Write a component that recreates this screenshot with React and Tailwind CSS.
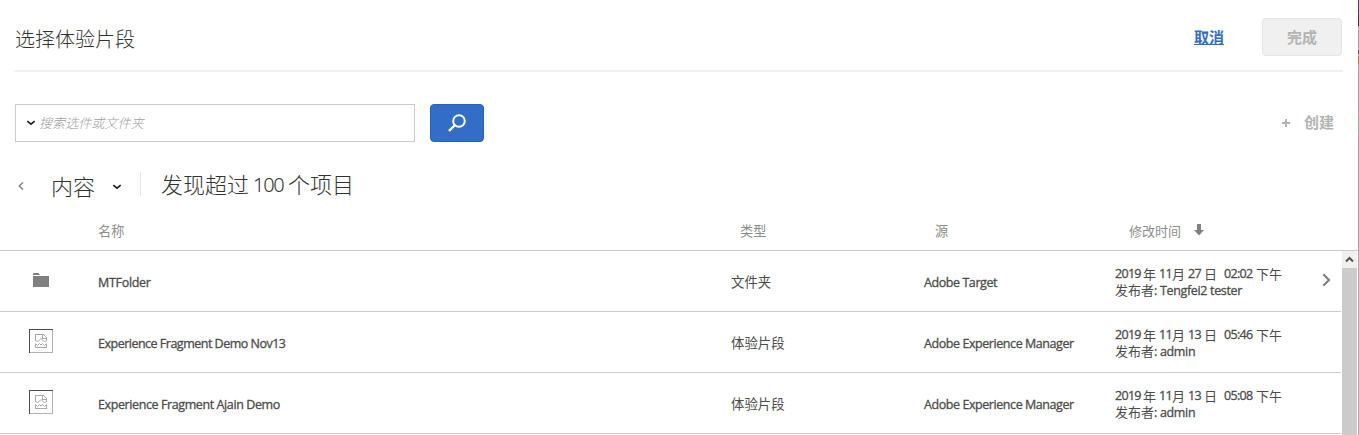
import React from "react";

const rows = [
  { folder: true, name: "MTFolder", tracking: "tracking-[-0.3px]", type: "文件夹", source: "Adobe Target", day: "27", time: "02:02", by: "Tengfei2 tester" },
  { name: "Experience Fragment Demo Nov13", tracking: "tracking-[-0.5px]", type: "体验片段", source: "Adobe Experience Manager", day: "13", time: "05:46", by: "admin" },
  { name: "Experience Fragment Ajain Demo", tracking: "tracking-[-0.4px]", type: "体验片段", source: "Adobe Experience Manager", day: "13", time: "05:08", by: "admin" },
];

function Latin({ children, className = "tracking-[-0.43px]" }) {
  return (
    <span className={`font-['Open_Sans',sans-serif] text-[12.5px] [-webkit-text-stroke:0.3px_#4b4b4b] ${className}`}>{children}</span>
  );
}

function Digits({ children, className = "" }) {
  return (
    <span className={`inline-block font-['Open_Sans',sans-serif] text-[12.5px] tracking-[-0.7px] [-webkit-text-stroke:0.3px_#4b4b4b] ${className}`}>{children}</span>
  );
}

function Chevron() {
  return (
    <svg width="10" height="6" viewBox="0 0 10 6" className="block">
      <path d="M1.3 1.2 5 4.2 8.7 1.2" fill="none" stroke="#1e1e1e" strokeWidth="1.7" />
    </svg>
  );
}

function FolderIcon() {
  return (
    <svg width="16" height="14" viewBox="0 0 16 14" className="block">
      <path d="M0 2V1Q0 0 1 0H5.5L7 2ZM0 3H16V14H0Z" fill="#808080" />
    </svg>
  );
}

function MissingImageIcon() {
  return (
    <svg width="24" height="24" viewBox="0 0 24 24" className="block" shapeRendering="crispEdges">
      <path d="M24 0V24H0" fill="none" stroke="#b0b0b0" strokeWidth="2" />
      <path d="M0 24V0H24" fill="none" stroke="#4b4b4b" strokeWidth="2" />
      <g fill="none" stroke="#a8a8a8" strokeWidth="1">
        <path d="M6.5 12V5.5H14.5L17.5 8.5V12M13.5 5.5V9.5H17.5" />
        <path d="M6.5 18.5H17.5M6.5 18.5V15M17.5 18.5V15" />
        <path d="M6.5 11 8.5 13 12 9.5 15.5 13 17.5 11M6.5 14.5 8.5 16.5 10.5 14.5 12 16 13.5 14.5 15.5 16.5 17.5 14.5" shapeRendering="auto" />
      </g>
    </svg>
  );
}

function Row({ row }) {
  return (
    <div className="flex h-[61px] w-[1341px] shrink-0 items-center border-b border-[#cbcbcb] text-[13px] text-[#4b4b4b]">
      <div className="flex w-[98px] shrink-0 pb-0.5 pl-[29px]">
        {row.folder ? <span className="pl-1"><FolderIcon /></span> : <MissingImageIcon />}
      </div>
      <div className="w-[633px] shrink-0 pt-1"><Latin className={row.tracking}>{row.name}</Latin></div>
      <div className="w-[193px] shrink-0 pt-0.5 text-[13.4px]">{row.type}</div>
      <div className="w-[191px] shrink-0 pt-1"><Latin>{row.source}</Latin></div>
      <div className="w-[207px] shrink-0 pt-0.5 leading-4">
        <div className="flex h-4">
          <Digits className="w-[28px]">2019</Digits>年
          <Digits className="ml-[3px] w-[13px]">11</Digits>月
          <Digits className="ml-[3px] w-[16px]">{row.day}</Digits>日
          <Digits className="ml-[7px] w-[32px]">{row.time}</Digits>下午
        </div>
        <div className="h-4">发布者<Latin className="tracking-[-0.33px]">: {row.by}</Latin></div>
      </div>
      {row.folder && (
        <svg width="9" height="14" viewBox="0 0 9 14" className="mb-0.5 block">
          <path d="M1.3 1.3 7 7 1.3 12.7" fill="none" stroke="#808080" strokeWidth="2.1" />
        </svg>
      )}
    </div>
  );
}

export default function App() {
  return (
    <div className="flex h-[435px] w-[1359px] overflow-hidden bg-white font-['Noto_Sans','Noto_Sans_CJK_SC',sans-serif] text-[#323232]">
      <div className="flex w-[1358px] shrink-0 flex-col">
        <header className="ml-[14px] flex h-[72px] w-[1329px] shrink-0 items-center border-b-2 border-[#f0f0f0] pt-[3px]">
          <h1 className="ml-px pt-[5px] font-['Noto_Sans_CJK_SC'] text-[20px] font-light leading-[30px]">选择体验片段</h1>
          <a className="ml-auto font-['Noto_Sans_CJK_SC'] text-[15px] font-bold leading-[22px] text-[#326ec8] underline underline-offset-1">取消</a>
          <button className="ml-[38px] mr-px h-[38px] w-[80px] rounded-[4px] border border-[#e4e4e4] bg-[#f0f0f0] pt-0.5 font-['Noto_Sans_CJK_SC'] text-[15px] font-bold text-[#b3b3b3]">完成</button>
        </header>

        <div className="mt-8 flex h-[38px] shrink-0 items-center pl-[15px] pr-[24px]">
          <div className="flex h-[38px] w-[400px] items-center border border-[#cbcbcb] pl-[10px]">
            <Chevron />
            <span className="ml-[3px] font-['Noto_Sans_CJK_SC'] text-[13.1px] font-light italic text-[#a0a0a0]">搜索选件或文件夹</span>
          </div>
          <button className="ml-[15px] flex h-[38px] w-[54px] items-center justify-center rounded-[4px] border border-[#2362be] bg-[#326ec8]">
            <svg width="18" height="18" viewBox="0 0 18 18">
              <circle cx="11" cy="7" r="5.8" fill="none" stroke="white" strokeWidth="2" />
              <path d="M7 11 1 17" stroke="white" strokeWidth="2.4" />
            </svg>
          </button>
          <div className="ml-auto flex items-center text-[#b3b3b3]">
            <svg width="8" height="8" viewBox="0 0 8 8"><path d="M4 0V8M0 4H8" stroke="#b3b3b3" strokeWidth="2" /></svg>
            <span className="ml-[14px] pb-0.5 font-['Noto_Sans_CJK_SC'] text-[15px] font-bold leading-[22px]">创建</span>
          </div>
        </div>

        <div className="mt-[28px] flex h-[32px] shrink-0 items-center pl-[18px] font-['Noto_Sans_CJK_SC'] text-[22px] font-light">
          <svg width="6" height="8" viewBox="0 0 6 8"><path d="M5 0.5 1.3 4 5 7.5" fill="none" stroke="#808080" strokeWidth="1.5" /></svg>
          <span className="ml-[27px] pb-px">内容</span>
          <span className="ml-[17px] pt-0.5"><Chevron /></span>
          <span className="mb-1 ml-[18px] h-6 w-px bg-[#e6e6e6]" />
          <span className="ml-5 pb-1.5">发现超过</span>
          <span className="ml-[4px] w-[35px] pb-0.5 font-['Noto_Sans'] text-[20px] tracking-[-1.3px]">100</span>
          <span className="pb-1.5">个项目</span>
        </div>

        <div className="flex h-[49px] shrink-0 items-center border-b border-[#cbcbcb] pt-[11px] text-[13.2px] text-[#8c8c8c]">
          <div className="ml-[98px] w-[642px] shrink-0">名称</div>
          <div className="w-[195px] shrink-0">类型</div>
          <div className="w-[194px] shrink-0">源</div>
          <div className="text-[13px]">修改时间</div>
          <svg width="10" height="12" viewBox="0 0 10 12" className="mb-1 ml-[13px] block"><path d="M3 0H7V6H10L5 11.5 0 6H3Z" fill="#808080" /></svg>
        </div>

        <div className="flex min-h-0 flex-1">
          <div className="flex w-[1342px] shrink-0 flex-col">
            {rows.map((row) => <Row key={row.name} row={row} />)}
          </div>
          <div className="flex w-[15px] flex-col bg-[#cbcbcb]">
            <div className="flex h-[17px] items-center justify-center bg-[#f0f0f0]">
              <svg width="9" height="7" viewBox="0 0 9 7"><path d="M1 5.5 4.5 2 8 5.5" fill="none" stroke="#505050" strokeWidth="2" /></svg>
            </div>
          </div>
        </div>
      </div>
      <div className="flex w-px shrink-0 flex-col bg-[#a5a7aa]">
        <span className="h-[15px] bg-[#1b4787]" />
        <span className="h-[11px] bg-[#333333]" />
        <span className="mt-[24px] h-1 bg-[#55565a]" />
        <span className="mt-[2px] h-[8px] bg-[#9c7a52]" />
        <span className="mt-[53px] h-[14px] bg-[#82b5ad]" />
      </div>
    </div>
  );
}
